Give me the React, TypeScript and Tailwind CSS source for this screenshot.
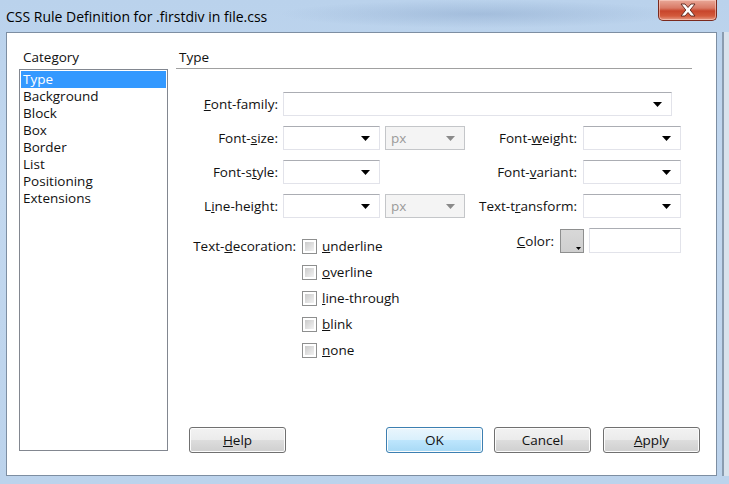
import React from "react";

type SelectProps = {
  width: string;
  value?: string;
  disabled?: boolean;
};

function Arrow({ disabled }: { disabled?: boolean }) {
  return (
    <svg width="9" height="5" viewBox="0 0 9 5" className="shrink-0">
      <path d="M0 0 H9 L4.5 5 Z" fill={disabled ? "#8a8a8a" : "#000"} />
    </svg>
  );
}

function Select({ width, value, disabled }: SelectProps) {
  return (
    <div
      className={
        width +
        " h-[24px] flex items-center justify-between pl-[5px] pr-[9px] border " +
        (disabled
          ? "bg-[#f4f4f4] border-[#c4c6c9] text-[#9a9a9a]"
          : "bg-white border-[#e2e3ea] border-t-[#abadb3]")
      }
    >
      <span>{value}</span>
      <Arrow disabled={disabled} />
    </div>
  );
}

function Label({ width, children }: { width: string; children: React.ReactNode }) {
  return <div className={width + " shrink-0 text-right pr-[1px]"}>{children}</div>;
}

function Check({ children }: { children: React.ReactNode }) {
  return (
    <div className="h-[26px] flex items-center">
      <div className="w-[15px] h-[15px] border border-[#8e8f8f] bg-white p-[2px]">
        <div className="w-full h-full bg-gradient-to-br from-[#cbcbcb] to-[#f2f2f2]" />
      </div>
      <div className="ml-[5px]">{children}</div>
    </div>
  );
}

function Btn({ children, primary }: { children: React.ReactNode; primary?: boolean }) {
  return (
    <div
      className={
        "w-[97px] h-[26px] flex items-center justify-center rounded-[3px] border shadow-[inset_0_0_0_1px_#fcfcfc] " +
        (primary
          ? "border-[#3c7fb1] bg-[linear-gradient(#eaf6fd,#d9f0fc_50%,#bee6fd_50%,#a7d9f5)]"
          : "border-[#707070] bg-[linear-gradient(#f2f2f2,#ebebeb_50%,#dddddd_50%,#cfcfcf)]")
      }
    >
      {children}
    </div>
  );
}

const categories = [
  "Type",
  "Background",
  "Block",
  "Box",
  "Border",
  "List",
  "Positioning",
  "Extensions",
];

export default function App() {
  return (
    <div className="w-[729px] h-[484px] flex flex-col overflow-hidden bg-[linear-gradient(#bad2ec,#c3d8ef_40%,#bcd3ec)] font-['Open_Sans','Noto_Sans',sans-serif] text-[13.5px] leading-[18px] text-[#111]">
      {/* Title bar (aero glass) */}
      <div className="h-[32px] shrink-0 flex items-start bg-[radial-gradient(ellipse_200px_14px_at_480px_14px,rgba(120,150,190,0.35),transparent)]">
        <div className="pl-[6px] pt-[8px] text-[14px] text-black">
          CSS Rule Definition for .firstdiv in file.css
        </div>
        <div className="ml-auto mr-[12px] w-[59px] h-[21px] rounded-b-[5px] border border-t-0 border-[#7a2a1e] bg-[linear-gradient(#e9a898,#d97a66_40%,#c8452b_55%,#d35a3c_80%,#e69a84)] flex items-center justify-center shadow-[inset_0_0_0_1px_rgba(255,220,210,0.5)]">
          <svg width="16" height="14" viewBox="0 0 16 14">
            <path
              d="M1 1 H5 L8 4.5 L11 1 H15 L10.2 7 L15 13 H11 L8 9.5 L5 13 H1 L5.8 7 Z"
              fill="#fff"
              stroke="#5a2218"
              strokeWidth="0.9"
              strokeLinejoin="round"
            />
          </svg>
        </div>
      </div>

      {/* Frame + client */}
      <div className="flex-1 flex pl-[6px] pb-[8px]">
        <div className="w-[711px] bg-white border border-[#7d8ea2] flex pt-[15px]">
          {/* Left column */}
          <div className="ml-[12px] w-[150px] flex flex-col">
            <div className="pl-[4px]">Category</div>
            <div className="mt-[3px] h-[382px] border border-[#828790] p-[1px]">
              {categories.map((c, i) => (
                <div
                  key={c}
                  className={
                    "h-[17px] leading-[17px] pl-[2px] " +
                    (i === 0 ? "bg-[#3399ff] text-white" : "")
                  }
                >
                  {c}
                </div>
              ))}
            </div>
          </div>

          {/* Right column */}
          <div className="ml-[8px] flex-1 flex flex-col pr-[16px] pb-[22px]">
            <div className="h-[21px] mr-[8px] border-b border-[#a0a0a0] pl-[3px]">Type</div>

            <div className="mt-[23px] flex flex-col gap-[10px]">
              <div className="h-[24px] flex items-center">
                <Label width="w-[103px]">
                  <u>F</u>ont-family:
                </Label>
                <div className="ml-[4px]">
                  <Select width="w-[389px]" />
                </div>
              </div>

              <div className="h-[24px] flex items-center">
                <Label width="w-[103px]">
                  Font-<u>s</u>ize:
                </Label>
                <div className="ml-[4px]">
                  <Select width="w-[97px]" />
                </div>
                <div className="ml-[5px]">
                  <Select width="w-[80px]" value="px" disabled />
                </div>
                <Label width="w-[113px]">
                  Font-<u>w</u>eight:
                </Label>
                <div className="ml-[5px]">
                  <Select width="w-[98px]" />
                </div>
              </div>

              <div className="h-[24px] flex items-center">
                <Label width="w-[103px]">
                  Font-s<u>t</u>yle:
                </Label>
                <div className="ml-[4px]">
                  <Select width="w-[97px]" />
                </div>
                <div className="w-[85px]" />
                <Label width="w-[113px]">
                  Font-<u>v</u>ariant:
                </Label>
                <div className="ml-[5px]">
                  <Select width="w-[98px]" />
                </div>
              </div>

              <div className="h-[24px] flex items-center">
                <Label width="w-[103px]">
                  L<u>i</u>ne-height:
                </Label>
                <div className="ml-[4px]">
                  <Select width="w-[97px]" />
                </div>
                <div className="ml-[5px]">
                  <Select width="w-[80px]" value="px" disabled />
                </div>
                <Label width="w-[113px]">
                  Text-t<u>r</u>ansform:
                </Label>
                <div className="ml-[5px]">
                  <Select width="w-[98px]" />
                </div>
              </div>

              {/* Text decoration + color */}
              <div className="flex items-start">
                <div className="mt-[5px] flex items-start">
                  <div className="w-[120px] h-[26px] flex items-center justify-end">
                    Text-<u>d</u>ecoration:
                  </div>
                  <div className="ml-[6px] flex flex-col">
                    <Check>
                      <u>u</u>nderline
                    </Check>
                    <Check>
                      <u>o</u>verline
                    </Check>
                    <Check>
                      <u>l</u>ine-through
                    </Check>
                    <Check>
                      <u>b</u>link
                    </Check>
                    <Check>
                      <u>n</u>one
                    </Check>
                  </div>
                </div>
                <div className="ml-auto mr-[19px] h-[25px] flex items-center">
                  <div>
                    <u>C</u>olor:
                  </div>
                  <div className="ml-[6px] w-[24px] h-[24px] border border-[#8e8f8f] bg-[linear-gradient(#d8d8d8,#cfcfcf)] flex items-end justify-end p-[2px]">
                    <svg width="5" height="3" viewBox="0 0 5 3">
                      <path d="M0 0 H5 L2.5 3 Z" fill="#000" />
                    </svg>
                  </div>
                  <div className="ml-[5px] w-[92px] h-[25px] bg-white border border-[#e2e3ea] border-t-[#abadb3]" />
                </div>
              </div>
            </div>

            {/* Buttons */}
            <div className="mt-auto flex items-center">
              <div className="ml-[13px]">
                <Btn>
                  <u>H</u>elp
                </Btn>
              </div>
              <div className="ml-[100px]">
                <Btn primary>OK</Btn>
              </div>
              <div className="ml-[11px]">
                <Btn>Cancel</Btn>
              </div>
              <div className="ml-[12px]">
                <Btn>
                  <u>A</u>pply
                </Btn>
              </div>
            </div>
          </div>
        </div>
        <div className="w-[5px]" />
        <div className="w-[2px] bg-[#8a9cb0]" />
        <div className="flex-1 bg-[#d8e2ec]" />
      </div>
    </div>
  );
}
